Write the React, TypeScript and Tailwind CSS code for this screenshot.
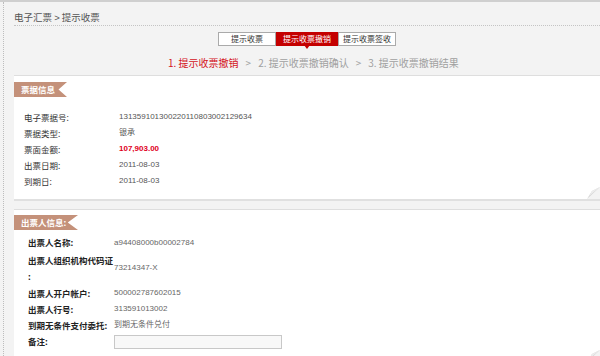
import React from 'react';

const cjk = "font-['Noto_Sans_CJK_SC',sans-serif]";
const num = "font-['Liberation_Sans','Noto_Sans_CJK_SC',sans-serif]";

const Ribbon = ({ label, width }: { label: string; width: string }) => (
  <div
    className={`h-[15px] ${width} bg-[#c4917a] text-white text-[8.5px] font-bold leading-[15px] pl-[7px] [clip-path:polygon(0_0,100%_0,84%_50%,100%_100%,0_100%)]`}
  >
    {label}
  </div>
);

const Curl = ({ className }: { className: string }) => (
  <svg width="13" height="12" viewBox="0 0 13 12" className={`absolute right-0 ${className}`}>
    <polygon points="13,0 13,12 0,12" fill="#f3f3f3" />
    <polygon points="13,0 0,12 5,4" fill="#d2d2d2" />
    <polygon points="13,0 5,4 2,9" fill="#ececec" />
  </svg>
);

const billRows = [
  { label: '电子票据号:', value: '131359101300220110803002129634' },
  { label: '票据类型:', value: '银承' },
  { label: '票面金额:', value: '107,903.00', red: true },
  { label: '出票日期:', value: '2011-08-03' },
  { label: '到期日:', value: '2011-08-03' },
];

const drawerRows = [
  { label: '出票人开户帐户:', value: '500002787602015' },
  { label: '出票人行号:', value: '313591013002' },
  { label: '到期无条件支付委托:', value: '到期无条件兑付' },
];

export default function App() {
  return (
    <div className={`w-[600px] h-[356px] overflow-hidden bg-[#f3f3f3] border-t-2 border-[#cfcfcf] ${cjk}`}>
      <div className="h-full ml-[3px] border-l border-dotted border-[#bdbdbd] pl-[10px] flex flex-col">
        {/* breadcrumb */}
        <div className="h-[24px] pt-[9px] text-[9.5px] leading-[12px] text-[#555] border-b border-dotted border-[#c4c4c4] whitespace-nowrap">
          电子汇票 <span className={num}>&gt;</span> 提示收票
        </div>

        {/* tabs */}
        <div className="flex mt-[6px] pl-[204px]">
          <div className="flex h-[14px] text-[8px] leading-[12px]">
            <div className="w-[58px] text-center bg-white border border-[#aaa] text-[#333]">提示收票</div>
            <div className="relative w-[62px] text-center bg-[#c40000] border border-[#c40000] text-white">
              提示收票撤销
              <span className="absolute left-1/2 -translate-x-1/2 top-[12px] w-0 h-0 border-l-[3px] border-r-[3px] border-t-[4px] border-l-transparent border-r-transparent border-t-[#c40000]" />
            </div>
            <div className="w-[58px] text-center bg-white border border-[#aaa] text-[#333]">提示收票签收</div>
          </div>
        </div>

        {/* steps */}
        <div className="mt-[11px] pl-[154px] text-[10px] leading-[12px] text-[#a0a0a0] whitespace-nowrap">
          <span className="text-[#d4121a]">1. 提示收票撤销</span>
          <span className="mx-[7px]">&gt;</span>
          <span>2. 提示收票撤销确认</span>
          <span className="mx-[7px]">&gt;</span>
          <span>3. 提示收票撤销结果</span>
        </div>

        {/* bill info panel */}
        <div className="relative mt-[6px] bg-white border-t border-[#dedede] h-[126px] border-b-2 border-b-[#e0e0e0]">
          <div className="mt-[6px]">
            <Ribbon label="票据信息" width="w-[53px]" />
          </div>
          <div className="mt-[12px] pl-[10px] text-[8.5px] leading-[16px]">
            {billRows.map((r) => (
              <div key={r.label} className="flex items-center h-[16px]">
                <div className="w-[95px] text-[#333]">{r.label}</div>
                <div
                  className={
                    r.red
                      ? `${num} text-[8px] font-bold text-[#e0001b]`
                      : `${num} text-[8px] text-[#555]`
                  }
                >
                  {r.value}
                </div>
              </div>
            ))}
          </div>
          <Curl className="bottom-0" />
        </div>

        {/* drawer info panel */}
        <div className="relative mt-[8px] bg-white border-t border-[#dedede] flex-1">
          <div className="mt-[5px]">
            <Ribbon label="出票人信息:" width="w-[64px]" />
          </div>
          <div className="mt-[4px] pl-[14px] text-[8.5px]">
            <div className="flex h-[17px] items-center">
              <div className="w-[86px] text-[#222] font-semibold">出票人名称:</div>
              <div className={`${num} text-[8px] text-[#666]`}>a94408000b00002784</div>
            </div>
            <div className="flex items-center h-[34px]">
              <div className="w-[86px] text-[#222] font-semibold leading-[16px] whitespace-nowrap">
                出票人组织机构代码证
                <br />:
              </div>
              <div className={`${num} text-[8px] text-[#666]`}>73214347-X</div>
            </div>
            {drawerRows.map((r) => (
              <div key={r.label} className="flex h-[16px] items-center">
                <div className="w-[86px] text-[#222] font-semibold whitespace-nowrap">{r.label}</div>
                <div className={`${num} text-[8px] text-[#666]`}>{r.value}</div>
              </div>
            ))}
            <div className="flex h-[17px] items-center">
              <div className="w-[86px] text-[#222] font-semibold">备注:</div>
              <input className="w-[168px] h-[14px] border border-[#c8c8c8] bg-[#f8f8f8]" />
            </div>
          </div>
          <Curl className="bottom-[-6px]" />
        </div>
      </div>
    </div>
  );
}
